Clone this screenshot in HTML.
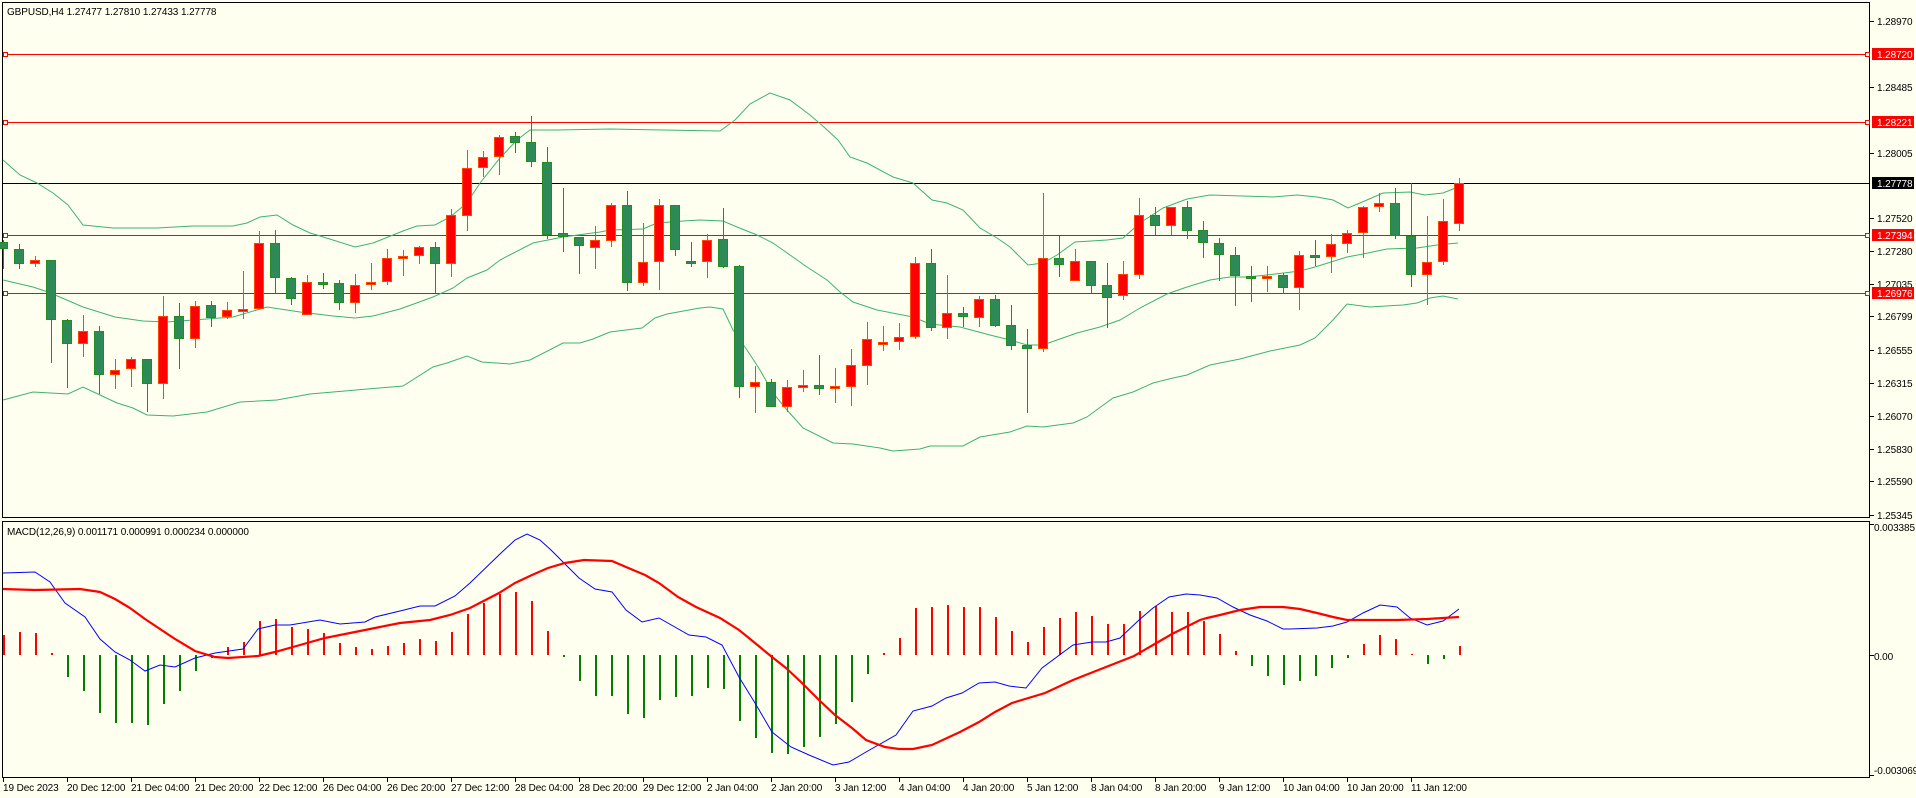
<!DOCTYPE html>
<html><head><meta charset="utf-8"><style>
html,body{margin:0;padding:0;background:#fffff0;}
svg{display:block;font-family:"Liberation Sans",sans-serif;font-size:10px;letter-spacing:-0.1px;}
.r rect,rect.r{fill:#ff0000;stroke:#ff4500;}
.g rect,rect.g{fill:#2e8b57;stroke:#228b22;}
.r line{stroke:#ff4500;}
.g line{stroke:#228b22;}
</style></head><body>
<svg width="1916" height="798" viewBox="0 0 1916 798" xmlns="http://www.w3.org/2000/svg" shape-rendering="crispEdges">
<rect x="0" y="0" width="1916" height="798" fill="#fffff0"/>
<rect x="2.5" y="2.5" width="1867" height="515" fill="none" stroke="#000"/>
<rect x="2.5" y="521.5" width="1867" height="256" fill="none" stroke="#000"/>
<text x="7" y="15" fill="#000">GBPUSD,H4  1.27477 1.27810 1.27433 1.27778</text>
<text x="7" y="535" fill="#000">MACD(12,26,9) 0.001171 0.000991 0.000234 0.000000</text>

<g stroke="#ff0000" stroke-width="1">
<line x1="3" y1="54.5" x2="1870" y2="54.5"/>
<line x1="3" y1="122.5" x2="1870" y2="122.5"/>
<line x1="3" y1="235.5" x2="1870" y2="235.5"/>
<line x1="3" y1="293.5" x2="1870" y2="293.5"/>
</g>
<line x1="3" y1="183.5" x2="1870" y2="183.5" stroke="#000"/>
<g fill="#fffff0" stroke="#ff0000">
<rect x="3.5" y="52.5" width="4" height="4"/><rect x="3.5" y="120.5" width="4" height="4"/>
<rect x="3.5" y="233.5" width="4" height="4"/><rect x="3.5" y="291.5" width="4" height="4"/>
<rect x="1865.5" y="52.5" width="4" height="4"/><rect x="1865.5" y="120.5" width="4" height="4"/>
<rect x="1865.5" y="233.5" width="4" height="4"/><rect x="1865.5" y="291.5" width="4" height="4"/>
</g>

<g fill="none" stroke="#3cb371" stroke-width="1" shape-rendering="auto">
<polyline points="3,160 20,175 37,183 53,193 68,205 83,225 93,226 113,228 157,228 193,226 233,226 247,223 260,217 277,215 293,225 310,233 317,235 355,247 373,243 403,231 417,226 435,225 450,217 467,203 480,183 500,158 517,140 530,130 557,130 610,129 720,131 735,120 750,104 770,93 790,100 810,115 825,128 838,140 850,157 867,163 893,177 913,183 932,200 947,203 963,210 980,228 997,238 1010,247 1028,265 1043,263 1057,255 1075,242 1107,240 1123,238 1140,223 1163,208 1187,199 1210,195 1273,197 1297,195 1317,197 1333,200 1348,208 1360,203 1383,193 1410,192 1425,195 1443,193 1458,187"/>
<polyline points="3,280 33,287 48,292 83,307 115,317 143,321 167,322 193,320 233,317 267,307 300,312 333,316 355,318 373,316 400,309 433,297 453,288 467,278 487,270 500,260 533,243 563,237 600,232 610,230 643,229 657,223 683,221 700,220 723,221 737,227 757,235 773,243 790,255 807,267 827,280 840,292 853,302 877,310 913,317 930,324 960,327 990,335 1010,340 1027,345 1043,345 1057,340 1077,333 1100,327 1120,320 1140,308 1167,294 1187,287 1210,280 1230,277 1247,277 1267,275 1300,271 1315,267 1347,257 1363,254 1387,249 1417,248 1437,245 1458,243"/>
<polyline points="3,400 33,392 68,394 83,387 100,395 117,403 133,408 147,415 173,416 207,412 240,402 277,400 310,394 403,386 433,367 447,363 467,356 482,362 510,364 530,360 563,343 580,343 593,339 610,332 642,328 655,318 667,314 700,308 710,307 723,309 733,330 747,350 760,370 773,393 787,410 803,428 833,443 853,444 880,448 893,451 920,449 930,446 963,446 980,437 1010,432 1027,426 1043,427 1073,423 1087,417 1113,398 1133,392 1153,383 1173,378 1187,375 1210,365 1240,359 1270,351 1300,345 1315,338 1333,320 1347,304 1370,307 1403,305 1417,303 1430,298 1443,296 1458,299"/>
</g>

<g class="g"><line x1="3.5" y1="240" x2="3.5" y2="269"/><rect x="-1.5" y="242.5" width="9" height="6"/></g>
<g class="g"><line x1="19.5" y1="244" x2="19.5" y2="269"/><rect x="14.5" y="249.5" width="9" height="14"/></g>
<g class="r"><line x1="35.5" y1="256" x2="35.5" y2="267"/><rect x="30.5" y="260.5" width="9" height="3"/></g>
<g class="g"><line x1="51.5" y1="260" x2="51.5" y2="363"/><rect x="46.5" y="260.5" width="9" height="59"/></g>
<g class="g"><line x1="67.5" y1="319" x2="67.5" y2="388"/><rect x="62.5" y="320.5" width="9" height="23"/></g>
<g class="r"><line x1="83.5" y1="315" x2="83.5" y2="357"/><rect x="78.5" y="331.5" width="9" height="12"/></g>
<g class="g"><line x1="99.5" y1="326" x2="99.5" y2="394"/><rect x="94.5" y="331.5" width="9" height="43"/></g>
<g class="r"><line x1="115.5" y1="359" x2="115.5" y2="389"/><rect x="110.5" y="370.5" width="9" height="4"/></g>
<g class="r"><line x1="131.5" y1="357" x2="131.5" y2="387"/><rect x="126.5" y="359.5" width="9" height="9"/></g>
<g class="g"><line x1="147.5" y1="359" x2="147.5" y2="412"/><rect x="142.5" y="359.5" width="9" height="24"/></g>
<g class="r"><line x1="163.5" y1="296" x2="163.5" y2="399"/><rect x="158.5" y="316.5" width="9" height="67"/></g>
<g class="g"><line x1="179.5" y1="303" x2="179.5" y2="369"/><rect x="174.5" y="316.5" width="9" height="22"/></g>
<g class="r"><line x1="195.5" y1="301" x2="195.5" y2="348"/><rect x="190.5" y="306.5" width="9" height="32"/></g>
<g class="g"><line x1="211.5" y1="301" x2="211.5" y2="327"/><rect x="206.5" y="305.5" width="9" height="12"/></g>
<g class="r"><line x1="227.5" y1="302" x2="227.5" y2="319"/><rect x="222.5" y="310.5" width="9" height="6"/></g>
<g class="r"><line x1="243.5" y1="271" x2="243.5" y2="319"/><rect x="238.5" y="309.5" width="9" height="2"/></g>
<g class="r"><line x1="259.5" y1="231" x2="259.5" y2="309"/><rect x="254.5" y="243.5" width="9" height="65"/></g>
<g class="g"><line x1="275.5" y1="230" x2="275.5" y2="293"/><rect x="270.5" y="243.5" width="9" height="34"/></g>
<g class="g"><line x1="291.5" y1="277" x2="291.5" y2="305"/><rect x="286.5" y="278.5" width="9" height="20"/></g>
<g class="r"><line x1="307.5" y1="275" x2="307.5" y2="315"/><rect x="302.5" y="282.5" width="9" height="32"/></g>
<g class="g"><line x1="323.5" y1="273" x2="323.5" y2="289"/><rect x="318.5" y="282.5" width="9" height="2"/></g>
<g class="g"><line x1="339.5" y1="280" x2="339.5" y2="310"/><rect x="334.5" y="283.5" width="9" height="19"/></g>
<g class="r"><line x1="355.5" y1="274" x2="355.5" y2="313"/><rect x="350.5" y="285.5" width="9" height="17"/></g>
<g class="r"><line x1="371.5" y1="263" x2="371.5" y2="290"/><rect x="366.5" y="282.5" width="9" height="2"/></g>
<g class="r"><line x1="387.5" y1="249" x2="387.5" y2="285"/><rect x="382.5" y="258.5" width="9" height="23"/></g>
<g class="r"><line x1="403.5" y1="250" x2="403.5" y2="276"/><rect x="398.5" y="256.5" width="9" height="2"/></g>
<g class="r"><line x1="419.5" y1="246" x2="419.5" y2="264"/><rect x="414.5" y="247.5" width="9" height="8"/></g>
<g class="g"><line x1="435.5" y1="242" x2="435.5" y2="293"/><rect x="430.5" y="247.5" width="9" height="16"/></g>
<g class="r"><line x1="451.5" y1="209" x2="451.5" y2="277"/><rect x="446.5" y="215.5" width="9" height="48"/></g>
<g class="r"><line x1="467.5" y1="150" x2="467.5" y2="231"/><rect x="462.5" y="168.5" width="9" height="47"/></g>
<g class="r"><line x1="483.5" y1="151" x2="483.5" y2="177"/><rect x="478.5" y="157.5" width="9" height="10"/></g>
<g class="r"><line x1="499.5" y1="135" x2="499.5" y2="175"/><rect x="494.5" y="137.5" width="9" height="19"/></g>
<g class="g"><line x1="515.5" y1="132" x2="515.5" y2="153"/><rect x="510.5" y="136.5" width="9" height="6"/></g>
<g class="g"><line x1="531.5" y1="116" x2="531.5" y2="167"/><rect x="526.5" y="142.5" width="9" height="19"/></g>
<g class="g"><line x1="547.5" y1="147" x2="547.5" y2="239"/><rect x="542.5" y="162.5" width="9" height="72"/></g>
<g class="g"><line x1="563.5" y1="188" x2="563.5" y2="252"/><rect x="558.5" y="233.5" width="9" height="3"/></g>
<g class="g"><line x1="579.5" y1="237" x2="579.5" y2="274"/><rect x="574.5" y="237.5" width="9" height="8"/></g>
<g class="r"><line x1="595.5" y1="226" x2="595.5" y2="269"/><rect x="590.5" y="240.5" width="9" height="7"/></g>
<g class="r"><line x1="611.5" y1="203" x2="611.5" y2="247"/><rect x="606.5" y="205.5" width="9" height="35"/></g>
<g class="g"><line x1="627.5" y1="191" x2="627.5" y2="291"/><rect x="622.5" y="205.5" width="9" height="77"/></g>
<g class="r"><line x1="643.5" y1="223" x2="643.5" y2="286"/><rect x="638.5" y="262.5" width="9" height="20"/></g>
<g class="r"><line x1="659.5" y1="199" x2="659.5" y2="290"/><rect x="654.5" y="205.5" width="9" height="56"/></g>
<g class="g"><line x1="675.5" y1="205" x2="675.5" y2="256"/><rect x="670.5" y="205.5" width="9" height="44"/></g>
<g class="g"><line x1="691.5" y1="242" x2="691.5" y2="267"/><rect x="686.5" y="261.5" width="9" height="2"/></g>
<g class="r"><line x1="707.5" y1="234" x2="707.5" y2="278"/><rect x="702.5" y="240.5" width="9" height="21"/></g>
<g class="g"><line x1="723.5" y1="208" x2="723.5" y2="268"/><rect x="718.5" y="239.5" width="9" height="27"/></g>
<g class="g"><line x1="739.5" y1="265" x2="739.5" y2="398"/><rect x="734.5" y="266.5" width="9" height="120"/></g>
<g class="r"><line x1="755.5" y1="366" x2="755.5" y2="413"/><rect x="750.5" y="382.5" width="9" height="4"/></g>
<g class="g"><line x1="771.5" y1="379" x2="771.5" y2="407"/><rect x="766.5" y="382.5" width="9" height="24"/></g>
<g class="r"><line x1="787.5" y1="380" x2="787.5" y2="412"/><rect x="782.5" y="387.5" width="9" height="19"/></g>
<g class="r"><line x1="803.5" y1="370" x2="803.5" y2="392"/><rect x="798.5" y="385.5" width="9" height="2"/></g>
<g class="g"><line x1="819.5" y1="355" x2="819.5" y2="395"/><rect x="814.5" y="385.5" width="9" height="3"/></g>
<g class="r"><line x1="835.5" y1="368" x2="835.5" y2="403"/><rect x="830.5" y="386.5" width="9" height="2"/></g>
<g class="r"><line x1="851.5" y1="349" x2="851.5" y2="406"/><rect x="846.5" y="365.5" width="9" height="21"/></g>
<g class="r"><line x1="867.5" y1="322" x2="867.5" y2="385"/><rect x="862.5" y="339.5" width="9" height="26"/></g>
<g class="r"><line x1="883.5" y1="326" x2="883.5" y2="351"/><rect x="878.5" y="342.5" width="9" height="2"/></g>
<g class="r"><line x1="899.5" y1="323" x2="899.5" y2="350"/><rect x="894.5" y="337.5" width="9" height="4"/></g>
<g class="r"><line x1="915.5" y1="257" x2="915.5" y2="339"/><rect x="910.5" y="263.5" width="9" height="73"/></g>
<g class="g"><line x1="931.5" y1="249" x2="931.5" y2="331"/><rect x="926.5" y="263.5" width="9" height="64"/></g>
<g class="r"><line x1="947.5" y1="275" x2="947.5" y2="339"/><rect x="942.5" y="313.5" width="9" height="14"/></g>
<g class="g"><line x1="963.5" y1="307" x2="963.5" y2="327"/><rect x="958.5" y="313.5" width="9" height="3"/></g>
<g class="r"><line x1="979.5" y1="296" x2="979.5" y2="327"/><rect x="974.5" y="299.5" width="9" height="18"/></g>
<g class="g"><line x1="995.5" y1="295" x2="995.5" y2="327"/><rect x="990.5" y="299.5" width="9" height="26"/></g>
<g class="g"><line x1="1011.5" y1="305" x2="1011.5" y2="350"/><rect x="1006.5" y="325.5" width="9" height="20"/></g>
<g class="g"><line x1="1027.5" y1="329" x2="1027.5" y2="413"/><rect x="1022.5" y="345.5" width="9" height="3"/></g>
<g class="r"><line x1="1043.5" y1="193" x2="1043.5" y2="352"/><rect x="1038.5" y="258.5" width="9" height="90"/></g>
<g class="g"><line x1="1059.5" y1="236" x2="1059.5" y2="277"/><rect x="1054.5" y="258.5" width="9" height="6"/></g>
<g class="r"><line x1="1075.5" y1="249" x2="1075.5" y2="281"/><rect x="1070.5" y="261.5" width="9" height="19"/></g>
<g class="g"><line x1="1091.5" y1="261" x2="1091.5" y2="293"/><rect x="1086.5" y="261.5" width="9" height="24"/></g>
<g class="g"><line x1="1107.5" y1="263" x2="1107.5" y2="328"/><rect x="1102.5" y="285.5" width="9" height="12"/></g>
<g class="r"><line x1="1123.5" y1="261" x2="1123.5" y2="300"/><rect x="1118.5" y="274.5" width="9" height="21"/></g>
<g class="r"><line x1="1139.5" y1="198" x2="1139.5" y2="279"/><rect x="1134.5" y="215.5" width="9" height="59"/></g>
<g class="g"><line x1="1155.5" y1="207" x2="1155.5" y2="235"/><rect x="1150.5" y="215.5" width="9" height="10"/></g>
<g class="r"><line x1="1171.5" y1="207" x2="1171.5" y2="235"/><rect x="1166.5" y="207.5" width="9" height="18"/></g>
<g class="g"><line x1="1187.5" y1="201" x2="1187.5" y2="239"/><rect x="1182.5" y="207.5" width="9" height="23"/></g>
<g class="g"><line x1="1203.5" y1="221" x2="1203.5" y2="258"/><rect x="1198.5" y="230.5" width="9" height="12"/></g>
<g class="g"><line x1="1219.5" y1="238" x2="1219.5" y2="281"/><rect x="1214.5" y="243.5" width="9" height="11"/></g>
<g class="g"><line x1="1235.5" y1="247" x2="1235.5" y2="306"/><rect x="1230.5" y="255.5" width="9" height="20"/></g>
<g class="g"><line x1="1251.5" y1="266" x2="1251.5" y2="302"/><rect x="1246.5" y="276.5" width="9" height="2"/></g>
<g class="r"><line x1="1267.5" y1="266" x2="1267.5" y2="292"/><rect x="1262.5" y="276.5" width="9" height="2"/></g>
<g class="g"><line x1="1283.5" y1="273" x2="1283.5" y2="294"/><rect x="1278.5" y="275.5" width="9" height="12"/></g>
<g class="r"><line x1="1299.5" y1="251" x2="1299.5" y2="310"/><rect x="1294.5" y="255.5" width="9" height="32"/></g>
<g class="g"><line x1="1315.5" y1="240" x2="1315.5" y2="266"/><rect x="1310.5" y="255.5" width="9" height="2"/></g>
<g class="r"><line x1="1331.5" y1="234" x2="1331.5" y2="273"/><rect x="1326.5" y="244.5" width="9" height="12"/></g>
<g class="r"><line x1="1347.5" y1="230" x2="1347.5" y2="253"/><rect x="1342.5" y="233.5" width="9" height="10"/></g>
<g class="r"><line x1="1363.5" y1="206" x2="1363.5" y2="258"/><rect x="1358.5" y="207.5" width="9" height="25"/></g>
<g class="r"><line x1="1379.5" y1="193" x2="1379.5" y2="212"/><rect x="1374.5" y="203.5" width="9" height="3"/></g>
<g class="g"><line x1="1395.5" y1="188" x2="1395.5" y2="239"/><rect x="1390.5" y="203.5" width="9" height="32"/></g>
<g class="g"><line x1="1411.5" y1="183" x2="1411.5" y2="287"/><rect x="1406.5" y="236.5" width="9" height="38"/></g>
<g class="r"><line x1="1427.5" y1="216" x2="1427.5" y2="305"/><rect x="1422.5" y="262.5" width="9" height="12"/></g>
<g class="r"><line x1="1443.5" y1="199" x2="1443.5" y2="265"/><rect x="1438.5" y="221.5" width="9" height="40"/></g>
<g class="r"><line x1="1459.5" y1="178" x2="1459.5" y2="231"/><rect x="1454.5" y="183.5" width="9" height="40"/></g>

<g stroke="#000">
<line x1="1870" y1="21.5" x2="1874" y2="21.5"/><line x1="1870" y1="87.5" x2="1874" y2="87.5"/>
<line x1="1870" y1="153.5" x2="1874" y2="153.5"/><line x1="1870" y1="218.5" x2="1874" y2="218.5"/>
<line x1="1870" y1="251.5" x2="1874" y2="251.5"/><line x1="1870" y1="284.5" x2="1874" y2="284.5"/>
<line x1="1870" y1="316.5" x2="1874" y2="316.5"/><line x1="1870" y1="350.5" x2="1874" y2="350.5"/>
<line x1="1870" y1="383.5" x2="1874" y2="383.5"/><line x1="1870" y1="416.5" x2="1874" y2="416.5"/>
<line x1="1870" y1="449.5" x2="1874" y2="449.5"/><line x1="1870" y1="481.5" x2="1874" y2="481.5"/>
<line x1="1870" y1="515.5" x2="1874" y2="515.5"/>
<line x1="1870" y1="524.5" x2="1874" y2="524.5"/><line x1="1870" y1="655.5" x2="1874" y2="655.5"/>
<line x1="1870" y1="775.5" x2="1874" y2="775.5"/>
</g>
<g fill="#000">
<text x="1877" y="25">1.28970</text><text x="1877" y="91">1.28485</text>
<text x="1877" y="157">1.28005</text><text x="1877" y="222">1.27520</text>
<text x="1877" y="255">1.27280</text><text x="1877" y="288">1.27035</text>
<text x="1877" y="320">1.26799</text><text x="1877" y="354">1.26555</text>
<text x="1877" y="387">1.26315</text><text x="1877" y="420">1.26070</text>
<text x="1877" y="453">1.25830</text><text x="1877" y="485">1.25590</text>
<text x="1877" y="519">1.25345</text>
<text x="1874" y="531">0.003385</text><text x="1874" y="660">0.00</text><text x="1874" y="774">-0.003069</text>
</g>
<rect x="1872" y="48" width="42" height="12" fill="#ff0000"/>
<rect x="1872" y="116" width="42" height="12" fill="#ff0000"/>
<rect x="1872" y="177" width="42" height="12" fill="#000"/>
<rect x="1872" y="229" width="42" height="12" fill="#ff0000"/>
<rect x="1872" y="287" width="42" height="12" fill="#ff0000"/>
<g fill="#fff">
<text x="1877" y="58">1.28720</text><text x="1877" y="126">1.28221</text>
<text x="1877" y="187">1.27778</text><text x="1877" y="239">1.27394</text>
<text x="1877" y="297">1.26976</text>
</g>

<g fill="#ff0000">
<rect x="3" y="635" width="2" height="20"/><rect x="19" y="632" width="2" height="23"/><rect x="35" y="633" width="2" height="22"/><rect x="51" y="653" width="2" height="2"/>
<rect x="227" y="647" width="2" height="8"/><rect x="243" y="642" width="2" height="13"/><rect x="259" y="621" width="2" height="34"/><rect x="275" y="619" width="2" height="36"/>
<rect x="291" y="627" width="2" height="28"/><rect x="307" y="629" width="2" height="26"/><rect x="323" y="633" width="2" height="22"/><rect x="339" y="643" width="2" height="12"/>
<rect x="355" y="647" width="2" height="8"/><rect x="371" y="649" width="2" height="6"/><rect x="387" y="646" width="2" height="9"/><rect x="403" y="643" width="2" height="12"/>
<rect x="419" y="639" width="2" height="16"/><rect x="435" y="641" width="2" height="14"/><rect x="451" y="632" width="2" height="23"/><rect x="467" y="614" width="2" height="41"/>
<rect x="483" y="603" width="2" height="52"/><rect x="499" y="594" width="2" height="61"/><rect x="515" y="592" width="2" height="63"/><rect x="531" y="601" width="2" height="54"/>
<rect x="547" y="631" width="2" height="24"/>
<rect x="883" y="653" width="2" height="2"/><rect x="899" y="638" width="2" height="17"/><rect x="915" y="608" width="2" height="47"/><rect x="931" y="607" width="2" height="48"/>
<rect x="947" y="605" width="2" height="50"/><rect x="963" y="607" width="2" height="48"/><rect x="979" y="607" width="2" height="48"/><rect x="995" y="617" width="2" height="38"/>
<rect x="1011" y="631" width="2" height="24"/><rect x="1027" y="642" width="2" height="13"/><rect x="1043" y="627" width="2" height="28"/><rect x="1059" y="618" width="2" height="37"/>
<rect x="1075" y="612" width="2" height="43"/><rect x="1091" y="616" width="2" height="39"/><rect x="1107" y="624" width="2" height="31"/><rect x="1123" y="624" width="2" height="31"/>
<rect x="1139" y="611" width="2" height="44"/><rect x="1155" y="606" width="2" height="49"/><rect x="1171" y="612" width="2" height="43"/><rect x="1187" y="612" width="2" height="43"/>
<rect x="1203" y="621" width="2" height="34"/><rect x="1219" y="634" width="2" height="21"/><rect x="1235" y="651" width="2" height="4"/>
<rect x="1363" y="644" width="2" height="11"/><rect x="1379" y="635" width="2" height="20"/><rect x="1395" y="639" width="2" height="16"/><rect x="1411" y="654" width="2" height="1"/>
<rect x="1459" y="646" width="2" height="9"/>
</g>
<g fill="#008000">
<rect x="67" y="655" width="2" height="22"/><rect x="83" y="655" width="2" height="36"/><rect x="99" y="655" width="2" height="58"/><rect x="115" y="655" width="2" height="68"/>
<rect x="131" y="655" width="2" height="68"/><rect x="147" y="655" width="2" height="70"/><rect x="163" y="655" width="2" height="49"/><rect x="179" y="655" width="2" height="36"/>
<rect x="195" y="655" width="2" height="16"/><rect x="211" y="655" width="2" height="3"/>
<rect x="563" y="655" width="2" height="2"/><rect x="579" y="655" width="2" height="26"/><rect x="595" y="655" width="2" height="41"/><rect x="611" y="655" width="2" height="41"/>
<rect x="627" y="655" width="2" height="59"/><rect x="643" y="655" width="2" height="63"/><rect x="659" y="655" width="2" height="45"/><rect x="675" y="655" width="2" height="42"/>
<rect x="691" y="655" width="2" height="41"/><rect x="707" y="655" width="2" height="33"/><rect x="723" y="655" width="2" height="34"/><rect x="739" y="655" width="2" height="66"/>
<rect x="755" y="655" width="2" height="83"/><rect x="771" y="655" width="2" height="98"/><rect x="787" y="655" width="2" height="99"/><rect x="803" y="655" width="2" height="92"/>
<rect x="819" y="655" width="2" height="82"/><rect x="835" y="655" width="2" height="69"/><rect x="851" y="655" width="2" height="47"/><rect x="867" y="655" width="2" height="19"/>
<rect x="1251" y="655" width="2" height="11"/><rect x="1267" y="655" width="2" height="21"/><rect x="1283" y="655" width="2" height="30"/><rect x="1299" y="655" width="2" height="26"/>
<rect x="1315" y="655" width="2" height="21"/><rect x="1331" y="655" width="2" height="13"/><rect x="1347" y="655" width="2" height="3"/>
<rect x="1427" y="655" width="2" height="9"/><rect x="1443" y="655" width="2" height="4"/>
</g>
<g fill="none" shape-rendering="auto">
<polyline stroke="#0000ff" stroke-width="1" points="3,573 35,572 50,582 65,603 85,617 100,639 115,652 130,660 145,671 160,665 175,667 195,658 215,653 243,649 258,629 275,625 290,625 320,620 340,624 365,622 375,617 400,611 420,606 435,606 455,596 470,583 500,554 515,540 527,534 540,540 551,550 579,578 595,589 612,592 626,610 642,622 659,618 689,635 706,637 722,645 739,677 755,703 772,732 791,747 809,755 833,765 849,762 866,752 896,735 913,711 932,706 946,698 962,693 979,683 995,682 1009,686 1026,688 1042,668 1073,645 1092,642 1106,642 1120,638 1139,620 1153,608 1169,597 1186,594 1200,595 1217,598 1233,607 1250,615 1267,621 1283,629 1290,629 1317,628 1333,626 1347,622 1363,613 1380,605 1397,607 1410,618 1427,625 1443,621 1459,609"/>
<polyline stroke="#ff0000" stroke-width="2.2" points="3,589 35,590 80,589 100,592 115,599 130,608 145,619 160,629 175,639 195,651 215,657 228,658 258,656 275,652 300,645 325,638 350,633 380,627 400,623 430,620 450,615 470,608 499,593 515,583 532,575 548,568 565,563 584,560 612,561 626,567 645,575 659,583 678,597 696,607 720,618 739,630 755,643 772,657 786,668 802,683 819,700 835,715 852,728 866,740 885,747 899,749 913,749 932,745 960,732 979,722 995,712 1012,703 1045,693 1073,680 1106,667 1134,656 1153,645 1172,634 1200,620 1207,618 1220,615 1240,610 1260,607 1283,607 1300,609 1317,613 1333,617 1347,620 1397,620 1427,619 1443,618 1459,617"/>
</g>

<g stroke="#000">
<line x1="3.5" y1="778" x2="3.5" y2="782"/><line x1="67.5" y1="778" x2="67.5" y2="782"/><line x1="131.5" y1="778" x2="131.5" y2="782"/><line x1="195.5" y1="778" x2="195.5" y2="782"/>
<line x1="259.5" y1="778" x2="259.5" y2="782"/><line x1="323.5" y1="778" x2="323.5" y2="782"/><line x1="387.5" y1="778" x2="387.5" y2="782"/><line x1="451.5" y1="778" x2="451.5" y2="782"/>
<line x1="515.5" y1="778" x2="515.5" y2="782"/><line x1="579.5" y1="778" x2="579.5" y2="782"/><line x1="643.5" y1="778" x2="643.5" y2="782"/><line x1="707.5" y1="778" x2="707.5" y2="782"/>
<line x1="771.5" y1="778" x2="771.5" y2="782"/><line x1="835.5" y1="778" x2="835.5" y2="782"/><line x1="899.5" y1="778" x2="899.5" y2="782"/><line x1="963.5" y1="778" x2="963.5" y2="782"/>
<line x1="1027.5" y1="778" x2="1027.5" y2="782"/><line x1="1091.5" y1="778" x2="1091.5" y2="782"/><line x1="1155.5" y1="778" x2="1155.5" y2="782"/><line x1="1219.5" y1="778" x2="1219.5" y2="782"/>
<line x1="1283.5" y1="778" x2="1283.5" y2="782"/><line x1="1347.5" y1="778" x2="1347.5" y2="782"/><line x1="1411.5" y1="778" x2="1411.5" y2="782"/>
</g>
<g fill="#000">
<text x="3" y="791">19 Dec 2023</text><text x="67" y="791">20 Dec 12:00</text><text x="131" y="791">21 Dec 04:00</text><text x="195" y="791">21 Dec 20:00</text>
<text x="259" y="791">22 Dec 12:00</text><text x="323" y="791">26 Dec 04:00</text><text x="387" y="791">26 Dec 20:00</text><text x="451" y="791">27 Dec 12:00</text>
<text x="515" y="791">28 Dec 04:00</text><text x="579" y="791">28 Dec 20:00</text><text x="643" y="791">29 Dec 12:00</text><text x="707" y="791">2 Jan 04:00</text>
<text x="771" y="791">2 Jan 20:00</text><text x="835" y="791">3 Jan 12:00</text><text x="899" y="791">4 Jan 04:00</text><text x="963" y="791">4 Jan 20:00</text>
<text x="1027" y="791">5 Jan 12:00</text><text x="1091" y="791">8 Jan 04:00</text><text x="1155" y="791">8 Jan 20:00</text><text x="1219" y="791">9 Jan 12:00</text>
<text x="1283" y="791">10 Jan 04:00</text><text x="1347" y="791">10 Jan 20:00</text><text x="1411" y="791">11 Jan 12:00</text>
</g>
</svg>
</body></html>
